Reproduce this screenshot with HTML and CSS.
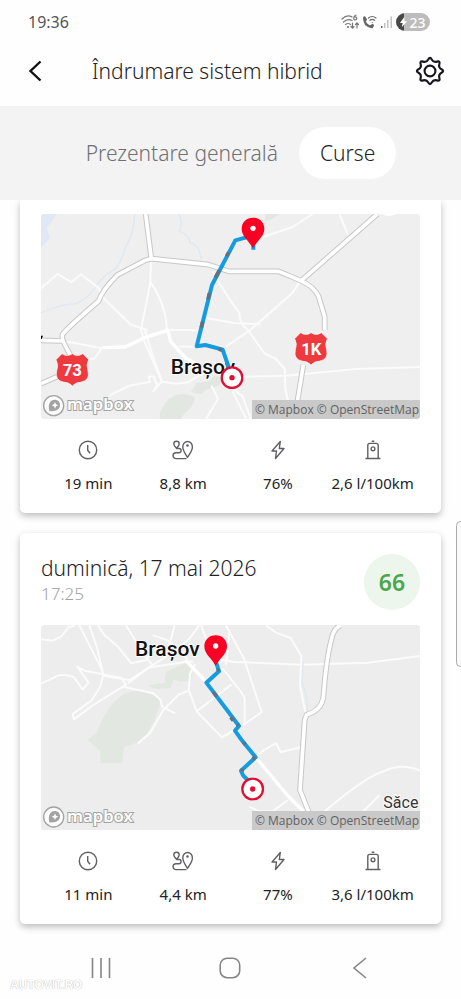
FILE: index.html
```
<!DOCTYPE html>
<html lang="ro">
<head>
<meta charset="utf-8">
<meta name="viewport" content="width=device-width, initial-scale=1">
<title>Îndrumare sistem hibrid</title>
<link rel="stylesheet" href="styles.css">
</head>
<body>
<svg class="sprite" aria-hidden="true">
  <symbol id="clock" viewBox="0 0 20 20"><circle cx="10" cy="10" r="8.700"/><path d="M9.700 5v5.200l2.300 3"/></symbol>
  <symbol id="route" viewBox="0 0 22 20"><path d="M4.500 8.200C3 6.500 1.800 5.200 1.800 3.900a2.700 2.700 0 0 1 5.400 0C7.200 5.200 6 6.500 4.500 8.200zM4.500 8.500H7a1.900 1.900 0 0 1 0 4.200H4a2.900 2.900 0 0 0 0 5.900h10.500M15.500 17.500c-1.800-3.400-4.700-6.800-4.700-10.600a4.800 5.400 0 0 1 9.600 0c0 3.800-3 7.200-4.900 10.600z"/><circle cx="15.500" cy="5.500" r=".6"/></symbol>
  <symbol id="bolt" viewBox="0 0 20 20"><path d="M12.300 1.500 4 11h4.500L7.500 18.500 16 8.500h-4.700z"/></symbol>
  <symbol id="pump" viewBox="0 0 20 20"><path d="M2.500 18.500h15M4.800 18.300V5.200q0-1.800 1.800-1.800h6.800q1.800 0 1.800 1.800v13.100M8.700 1.300h2.600"/><circle cx="10" cy="8.800" r="1.900"/></symbol>
  <symbol id="mapbox" viewBox="0 0 70 70">
    <circle cx="35" cy="35" r="30" fill="#fff" fill-opacity=".8" stroke="#a3a3a3" stroke-width="4"/>
    <path d="M22 51c-5-20 2-34 17-34 9 0 15 7 15 16 0 14-14 21-32 18z" fill="#a3a3a3"/>
    <path d="m39 24 3 7 7 3-7 3-3 7-3-7-7-3 7-3z" fill="#fff"/>
  </symbol>
  <symbol id="pin" viewBox="0 0 72 96"><path d="M36 2C16 2 2 16 2 35c0 23 19 33 34 58 15-25 34-35 34-58C70 16 56 2 36 2z" fill="#fa0023"/><circle cx="36" cy="34" r="8" fill="#fff"/></symbol>
  <symbol id="target" viewBox="0 0 70 70"><circle cx="35" cy="35" r="31" fill="#fff" stroke="#e01035" stroke-width="7"/><circle cx="35" cy="35" r="8" fill="#e01035"/></symbol>
  <symbol id="shield" viewBox="0 0 106 106"><path d="M22 4q16 11 31 0 15 11 31 0l18 18q-9 14-2 34 6 28-20 33-18 1-27 12-9-11-27-12Q0 84 6 56q7-20-2-34z" fill="#ee3a3f" stroke="#f6f6f6" stroke-width="2"/></symbol>
</svg>

<div class="status">
  <span class="clock-text">19:36</span>
  <span class="indicators">
    <svg width="18" height="16" viewBox="0 0 18 16" fill="none" stroke="#777" stroke-width="1.200" stroke-linecap="round"><path d="M1 5q5-5 10-2M2.500 8q4-4 8.500-1.500M4.500 10.500q2.500-2 5 0M15 1q-2.500 1-2.300 3.300a1.500 1.500 0 1 0 1-1.300M11.500 9v5m-1.500-1.500 1.500 1.700 1.500-1.700M16 14V9m-1.500 1.500L16 8.800l1.500 1.700"/><circle cx="7" cy="13" r=".5"/></svg>
    <svg width="15" height="16" viewBox="0 0 15 16" fill="none" stroke="#666" stroke-linecap="round"><path stroke-width="2.400" d="M2.500 3.500q-1 8 7.500 9.500"/><path stroke-width="3" d="M2.500 4.500 3.500 5.500M9 12.500l1.500-1"/><path stroke-width="1.200" d="M6.500 4q3.500-3 7.500 0M8 6.300q2.200-1.700 4.500 0M10.300 8.500v.1"/></svg>
    <svg width="13" height="16" viewBox="0 0 13 16"><path d="M1 12h1.500v2H1z" fill="#666"/><path d="M4 9h1.500v5H4zM7 6h1.500v8H7zM10.500 2.500H12V14h-1.500z" fill="#c2c2c2"/></svg>
    <span class="battery"><svg width="7" height="12" viewBox="0 0 8 12"><path d="M5 0 0 7h3L2 12l6-7H5z" fill="#fff"/></svg>23</span>
  </span>
</div>

<header class="topbar">
  <button class="icon-button" aria-label="Înapoi"><svg width="14" height="22" viewBox="0 0 14 22" fill="none" stroke="#111" stroke-width="2.400"><path d="M12.500 1.500 2.500 11l10 9.500"/></svg></button>
  <h1>Îndrumare sistem hibrid</h1>
  <button class="icon-button" aria-label="Setări"><svg width="30" height="30" viewBox="-15.500 -15.500 31 31" fill="none" stroke="#16161c" stroke-width="2.200"><path d="M11.900-1.780Q15.200 0 11.900 1.780 8.590 3.560 9.670 7.150 10.750 10.750 7.150 9.670 3.560 8.590 1.780 11.900 0 15.200-1.780 11.900-3.560 8.590-7.150 9.670-10.750 10.750-9.670 7.150-8.590 3.560-11.900 1.780-15.200 0-11.900-1.780-8.590-3.560-9.670-7.150-10.750-10.750-7.150-9.670-3.560-8.590-1.780-11.900 0-15.200 1.780-11.900 3.560-8.590 7.150-9.670 10.750-10.750 9.670-7.150 8.590-3.560 11.900-1.780z"/><circle r="5.600"/></svg></button>
</header>

<nav class="tabs">
  <button class="tab">Prezentare generală</button>
  <button class="tab tab-active" aria-current="page">Curse</button>
</nav>

<main class="trips">
  <article class="card card-scrolled">
    <figure class="map">
      <svg class="map-art" viewBox="15 27 1137 615" role="img" aria-label="Traseu în nordul orașului Brașov">
        <path fill="#efefef" d="M15 27h1137v615H15z"/>
        <path class="water-area" d="M15 27h48L32 70l10 28-27 32z"/>
        <path class="park" d="M372 642q-6-30 30-62 35-25 75-2-3 26-30 46l-14 18zM464 560l18-26 34-4 20-18 32 6-20 24-38 12-16 14zM690 27h40l-20 14-24 8z"/>
        <path class="stream" d="M296 27q-2 60-28 100-14 60-46 75-30 20-40 42-30 38-60 52-54 2-107 28M428 27q14 26 2 52 30 10 32 34 30 8 34 50"/>
        <g class="road minor">
          <path d="m15 250 50-43 42 25 28-24 52 40 18 34 78 76 52 17"/>
          <path d="m345 165-2 67-28 142 8 30 54 126M343 232q46 62 50 144"/>
          <path d="m326 374 28 90 24 66"/>
          <path d="m15 410 90 2 84 16 78-4 58-28 70-22 90 2M140 468l36-8 24-34"/>
          <path d="m220 572 60-30 62-12-4-14 14-2 12 26-12 18 26-28 44 6 34-4 50-30M430 424l52 2"/>
          <path d="m514 340 80 14 80 4M530 200q40 70 80 124 0 32 26 52l50 70 34 16 26 30 2 60 10 44"/>
          <path d="m570 425 70-48 130-114 24-36M600 516l150-4 210-20 192-6"/>
          <path d="m510 642 36-60-20-40M590 560l40 80M560 530l60 44 24 68M680 96l90-30 60-39M910 27l26 62"/>
        </g>
        <path class="road middle" d="m202 428 65-2 60-28 69-22 8 34 46 50 34 18"/>
        <path class="road major-edge" d="m329 27 17 134M108 458Q72 400 80 388q12-18 108-100 10-32 56-78l84-44 18-5 172 18 60 20h150l62 26q46 20 58 50l18 60v40M796 227 1024 27M15 406l64 2M15 536l56-24M802 480l-18 110"/>
        <path class="road major" d="m329 27 17 134M108 458Q72 400 80 388q12-18 108-100 10-32 56-78l84-44 18-5 172 18 60 20h150l62 26q46 20 58 50l18 60v40M796 227 1024 27M15 406l64 2M15 536l56-24M802 480l-18 110"/>
        <path fill="#fff" d="M1036 27h44q-22 12-44 0z"/>
        <text class="place" x="404" y="507">Brașov</text>
        <path class="route" d="M652 134v-42l-24 6-30 8-70 134-46 184 26-4 52 14 26 76"/>
        <path class="route-hybrid" d="m578 142-6 12M550 196l-12 22M520 264l-4 20M500 350l-4 18M548 432l10 4"/>
        <use href="#pin" x="615" y="36" width="72" height="96"/>
        <use href="#target" x="553" y="483" width="70" height="70"/>
        <use href="#shield" x="56" y="442" width="106" height="106"/><text class="road-no" x="109" y="513">73</text>
        <use href="#shield" x="772" y="379" width="106" height="106"/><text class="road-no" x="826" y="450">1K</text>
        <path d="M15 392h6l-4 10h-2z"/>
        <use href="#mapbox" x="18" y="567" width="70" height="70"/><text class="logo-text" x="93" y="616">mapbox</text>
      </svg>
      <figcaption>© Mapbox © OpenStreetMap</figcaption>
    </figure>
    <ul class="stats">
      <li><svg class="icon"><use href="#clock"/></svg>19 min</li>
      <li><svg class="icon icon-wide"><use href="#route"/></svg>8,8 km</li>
      <li><svg class="icon"><use href="#bolt"/></svg>76%</li>
      <li><svg class="icon"><use href="#pump"/></svg>2,6 l/100km</li>
    </ul>
  </article>

  <article class="card">
    <div class="card-head">
      <div><h2>duminică, 17 mai 2026</h2><time>17:25</time></div>
      <strong class="score">66</strong>
    </div>
    <figure class="map">
      <svg class="map-art" viewBox="15 29 1137 615" role="img" aria-label="Traseu din Brașov spre Săcele">
        <path fill="#ededed" d="M15 29h1137v615H15z"/>
        <path class="park" d="m156 374 26-24 18-40 30-46 38-32 50-8 46 20 10 20-20 54-24 40-28 24-38 14-6 48h-64l-2-38-22-18zM336 210l50-8 4-32 60-28 24 14-10 40-30 4-20-8-10 26-44 4z"/>
        <g class="road minor">
          <path d="m15 72 36 4 26-14 20-26 20-6M130 30l66 130 8 22 76 12 110-70 26-94"/>
          <path d="m160 30 24 70 18 80-10 36-26 40-56 40 4 16 56-42 100-62-14-20-40-8-70-14-22-12 34 48-18 20-26-36-28-8-18 2-59 28"/>
          <path d="m186 30 20 30 40 34 40 50 46-10 24-44M270 30l60 98 20 20-74 56"/>
          <path d="m262 214 90 20 22 20 4 20 40 20M306 384l36-30 40-70 46-46 30-12 4-50 16-30"/>
          <path d="m460 228 22 60 76 78 38-24M350 60l44 14 60 56M345 156l86-14 40-4M482 288l104-80"/>
          <path d="m495 30 50 130M400 120l60-50 30-40M580 50l-10 100"/>
          <path d="m570 30 54 100 53 160-42 30-65 40"/>
          <path d="m560 160 56 70 10 20v80M520 128l76 12 200 8 200-6 156-20"/>
          <path d="m690 30 30 22 44 16 32 54-4 88 20 100"/>
          <path d="m630 450 54-46 36-20 14 26 68-16M640 574l30 14h40l46-34"/>
          <path d="M864 590q130-110 180-122 50-26 108-2M980 590l50-50"/>
        </g>
        <path class="stream" d="m801 140-2 60 14 52 2 50"/>
        <path class="road middle" d="m448 134 70 74M596 342l60 80 100 120 50 50"/>
        <path class="road major-edge" d="M914 30q-22 10-28 44-16 60-24 174-8 38-50 50l-6 16-14 210 26 66"/>
        <path class="road major" d="M914 30q-22 10-28 44-16 60-24 174-8 38-50 50l-6 16-14 210 26 66"/>
        <text class="place" x="297" y="122">Brașov</text>
        <text class="place place-small" x="1042" y="578">Săce</text>
        <path class="route" d="m540 140 9 28-38 34 98 130-12 14 20 28 42 52-44 40 6 14 20 20"/>
        <path class="route-hybrid" d="m546 160 2 8M532 230l10 13M584 306l8 10M604 326l4 6M622 380l6 8M658 424l-8 8M620 460l-3 8"/>
        <use href="#pin" x="503" y="58" width="72" height="96"/>
        <use href="#target" x="615" y="486" width="70" height="70"/>
        <use href="#mapbox" x="18" y="570" width="70" height="70"/><text class="logo-text" x="93" y="619">mapbox</text>
      </svg>
      <figcaption>© Mapbox © OpenStreetMap</figcaption>
    </figure>
    <ul class="stats">
      <li><svg class="icon"><use href="#clock"/></svg>11 min</li>
      <li><svg class="icon icon-wide"><use href="#route"/></svg>4,4 km</li>
      <li><svg class="icon"><use href="#bolt"/></svg>77%</li>
      <li><svg class="icon"><use href="#pump"/></svg>3,6 l/100km</li>
    </ul>
  </article>
</main>

<div class="edge-handle"></div>

<footer class="system-nav">
  <button aria-label="Aplicații recente"><svg width="22" height="22" viewBox="0 0 22 22"><path d="M2.500 1v20M11 1v20M19.500 1v20"/></svg></button>
  <button aria-label="Ecran principal"><svg width="22" height="22" viewBox="0 0 22 22"><rect x="1.200" y="1.200" width="19.500" height="19.500" rx="7"/></svg></button>
  <button aria-label="Înapoi în sistem"><svg width="22" height="22" viewBox="0 0 22 22"><path d="M17 1 5 11l12 10"/></svg></button>
  <span class="watermark">AUTOVIT.RO</span>
</footer>
</body>
</html>
```
FILE: styles.css
```
* { box-sizing: border-box; }

body {
  position: relative;
  display: flex;
  flex-direction: column;
  min-height: 100vh;
  margin: 0;
  overflow-x: hidden;
  background: #fefefe;
  color: #222226;
  font-family: "Noto Sans", "Open Sans", sans-serif;
}

button {
  padding: 0;
  border: 0;
  background: none;
  color: inherit;
  font: inherit;
}

.sprite { position: absolute; width: 0; height: 0; }

.status {
  display: flex;
  align-items: center;
  justify-content: space-between;
  height: 44px;
  padding: 0 31px 0 28px;
  color: #555;
}

.clock-text { font-size: 16px; }
.indicators { display: flex; align-items: center; gap: 3px; }

.battery {
  display: flex;
  align-items: center;
  justify-content: center;
  gap: 2px;
  width: 34px;
  height: 18px;
  border-radius: 9px;
  background: linear-gradient(90deg, #484848 23%, #bcbcbc 23%);
  color: #fff;
  font-size: 14px;
  font-weight: 500;
}

.topbar {
  display: flex;
  align-items: center;
  height: 62px;
  padding: 0 16px 8px 20px;
}

.topbar h1 {
  flex: 1;
  margin: 0 0 0 42px;
  font-size: 21px;
  font-weight: 300;
  line-height: 28px;
}

.icon-button {
  display: grid;
  place-items: center;
  width: 30px;
  height: 30px;
}

.tabs {
  display: flex;
  align-items: center;
  justify-content: center;
  height: 94px;
  background: #f3f3f3;
}

.tab {
  height: 52px;
  padding: 0 21px;
  border-radius: 26px;
  color: #707073;
  font-size: 21px;
  font-weight: 300;
}

.tab-active { background: #fff; color: #222226; }

.trips {
  display: flex;
  flex-direction: column;
  gap: 20px;
  padding: 0 20px;
}

.card {
  padding: 21px 21px 20px;
  border-radius: 5px;
  background: #fff;
  box-shadow: 0 3px 7px rgba(0, 0, 0, .26);
}

.card-scrolled {
  padding-top: 14px;
  border-radius: 0 0 5px 5px;
  clip-path: inset(0 -12px -14px);
}

.card-head {
  display: flex;
  justify-content: space-between;
  margin-bottom: 15px;
}

.card-head h2 {
  margin: 0;
  font-size: 21px;
  font-weight: 300;
  line-height: 28px;
}

.card-head time {
  display: block;
  color: #a2a2a4;
  font-size: 17px;
  font-weight: 300;
  line-height: 24px;
}

.score {
  display: grid;
  place-items: center;
  width: 56px;
  height: 56px;
  border-radius: 50%;
  background: #edf6ed;
  color: #4ba64b;
  font-size: 23px;
  font-weight: 600;
}

.map {
  position: relative;
  margin: 0;
  overflow: hidden;
  border-radius: 3px;
}

.map-art { display: block; width: 100%; height: auto; }

.map figcaption {
  position: absolute;
  right: 0;
  bottom: 0;
  padding: 0 1px 0 3px;
  background: #c9c9c9;
  color: #626262;
  font-family: "Open Sans", sans-serif;
  font-size: 12px;
  line-height: 19px;
}

.road, .route, .route-hybrid, .stream { fill: none; stroke-linejoin: round; }
.minor { stroke: #fbfbfb; stroke-width: 6; }
.middle { stroke: #fff; stroke-width: 10; }
.major-edge { stroke: #c7c7c7; stroke-width: 17; }
.major { stroke: #fff; stroke-width: 11; }
.stream { stroke: #dfe8ef; stroke-width: 4; }
.water-area { fill: #e1e7f5; }
.park { fill: #e2e8e1; }
.route { stroke: #159bdf; stroke-width: 12; }
.route-hybrid { stroke: #64717c; stroke-width: 11; }

.place {
  fill: #111;
  stroke: #fff;
  stroke-width: 5px;
  paint-order: stroke;
  font-family: Roboto, sans-serif;
  font-size: 63px;
  font-weight: 500;
}

.place-small { fill: #333; font-size: 48px; font-weight: 400; }

.road-no {
  fill: #fff;
  font-family: Roboto, sans-serif;
  font-size: 50px;
  font-weight: 700;
  text-anchor: middle;
}

.logo-text {
  fill: #fff;
  stroke: #a3a3a3;
  stroke-width: 6px;
  paint-order: stroke;
  font-family: "Noto Sans", sans-serif;
  font-size: 50px;
  font-weight: 600;
}

.stats {
  display: grid;
  grid-template-columns: repeat(4, 1fr);
  margin: 21px 0 0;
  padding: 0;
  list-style: none;
}

.stats li {
  display: flex;
  flex-direction: column;
  align-items: center;
  gap: 13px;
  font-size: 15px;
  line-height: 20px;
  white-space: nowrap;
}

.icon {
  width: 20px;
  height: 20px;
  fill: none;
  stroke: #606063;
  stroke-width: 1.4px;
  stroke-linejoin: round;
}

.icon-wide { width: 22px; }

.edge-handle {
  position: absolute;
  top: 521px;
  right: -4px;
  width: 9px;
  height: 146px;
  border: 1px solid #aaa;
  border-radius: 5px;
  background: #fafafa;
}

.system-nav {
  position: relative;
  display: grid;
  grid-template-columns: repeat(3, 1fr);
  justify-items: center;
  align-items: center;
  height: 75px;
  padding: 12px 36px 0;
}

.system-nav svg {
  display: block;
  fill: none;
  stroke: #858585;
  stroke-width: 1.6px;
}

.watermark {
  position: absolute;
  bottom: 6px;
  left: 10px;
  color: #fff;
  font-family: "Liberation Sans", sans-serif;
  font-size: 12px;
  font-weight: 700;
  line-height: 16px;
  text-shadow: 0 0 1px #999;
}
```
